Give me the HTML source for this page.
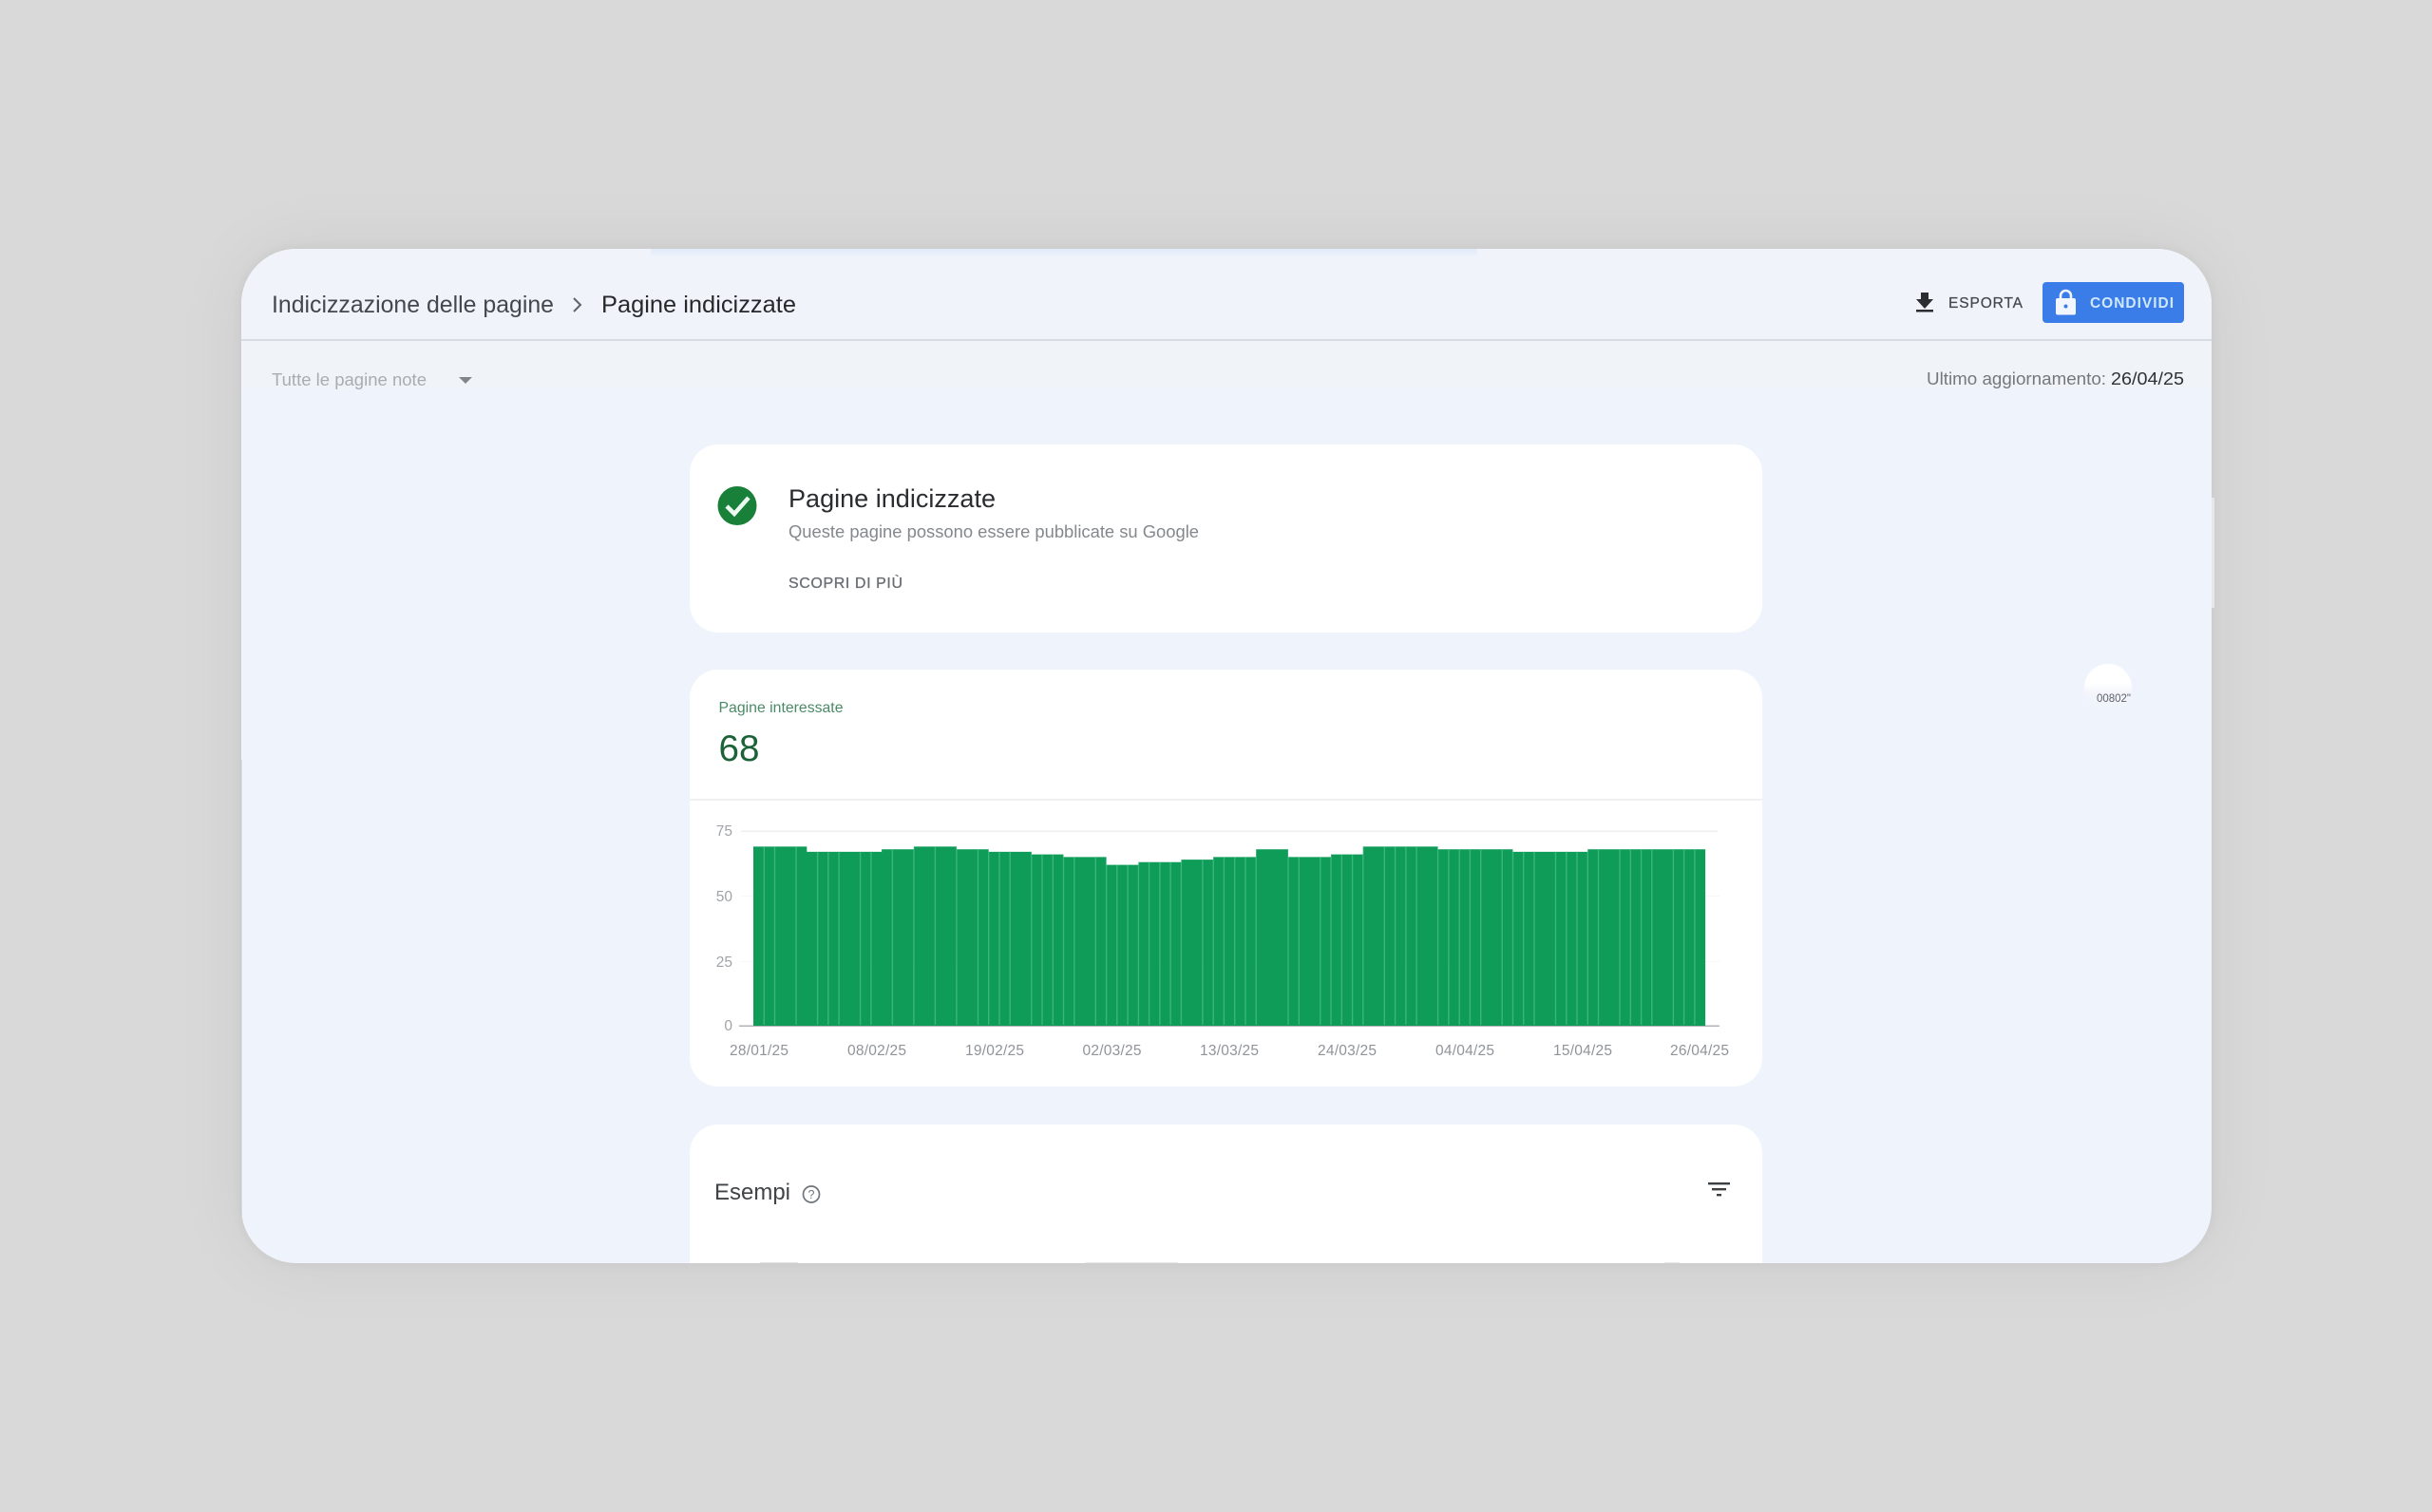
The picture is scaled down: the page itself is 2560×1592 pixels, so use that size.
<!DOCTYPE html>
<html lang="it">
<head>
<meta charset="utf-8">
<title>Pagine indicizzate</title>
<style>
html,body{margin:0;padding:0;width:2560px;height:1592px;overflow:hidden;background:#d9d9d9}
#shadow{position:absolute;left:254px;top:262px;width:2074px;height:1068px;border-radius:58px;box-shadow:0 0 12px rgba(0,0,0,.05),0 0 80px rgba(0,0,0,.06)}
svg{position:absolute;left:0;top:0}
text{font-family:"Liberation Sans",sans-serif}
</style>
</head>
<body>
<div id="shadow"></div>
<svg width="2560" height="1592" viewBox="0 0 2560 1592" xmlns="http://www.w3.org/2000/svg">
<defs>
<clipPath id="panel"><rect x="254" y="262" width="2074" height="1068" rx="58" ry="58"/></clipPath>
<clipPath id="bars"><path d="M793 1080V891.4H849.3V896.9H928.1V894.2H961.9V891.4H1006.9V894.2H1040.7V896.9H1085.8V899.6H1119.5V902.4H1164.6V910.6H1198.4V907.8H1243.4V905.1H1277.2V902.4H1322.2V894.2H1356V902.4H1401V899.6H1434.8V891.4H1513.6V894.2H1592.5V896.9H1671.3V894.2H1795.1V1080Z"/></clipPath>
<linearGradient id="band" x1="0" y1="0" x2="0" y2="1"><stop offset="0" stop-color="#e0eafa"/><stop offset="1" stop-color="#eff3fb"/></linearGradient>
<linearGradient id="dot" x1="0" y1="0" x2="0" y2="1"><stop offset="0" stop-color="#ffffff"/><stop offset=".4" stop-color="#ffffff"/><stop offset=".62" stop-color="#f3f5fb"/><stop offset="1" stop-color="#eff3fb"/></linearGradient>
</defs>

<g clip-path="url(#panel)">
<rect x="254" y="262" width="2074" height="1068" fill="#eff3fb"/>
<rect x="254" y="262" width="2074" height="96" fill="#f0f4fa"/>
<rect x="685" y="262" width="870" height="8" fill="url(#band)"/>
<rect x="254" y="357" width="2074" height="2" fill="#d6dbe2"/>
<rect x="254" y="359" width="2074" height="50" fill="#f0f3f8"/>

<!-- header -->
<text x="286" y="329" font-size="25" fill="#44474b" textLength="297" lengthAdjust="spacingAndGlyphs">Indicizzazione delle pagine</text>
<path d="M604 314L611 321L604 328" fill="none" stroke="#5f6368" stroke-width="2"/>
<text x="633" y="329" font-size="25" fill="#26282b" textLength="205" lengthAdjust="spacingAndGlyphs">Pagine indicizzate</text>

<path d="M2022 308H2030V315H2035L2026 325L2017 315H2022Z" fill="#2b2d30"/>
<rect x="2017" y="326" width="18" height="2.5" fill="#2b2d30"/>
<text x="2051" y="324" font-size="15.5" fill="#45484c" textLength="78" lengthAdjust="spacing" stroke="#45484c" stroke-width=".25">ESPORTA</text>

<rect x="2150" y="297" width="149" height="43" rx="4" fill="#3a7de8"/>
<rect x="2164" y="314" width="21" height="17.5" rx="2" fill="#f2f7ff"/>
<path d="M2169 315V311.500A5.500 5.500 0 0 1 2180 311.500V315" fill="none" stroke="#f2f7ff" stroke-width="2.600"/>
<circle cx="2174.500" cy="322.500" r="2" fill="#3a7de8"/>
<text x="2200" y="324" font-size="15.5" fill="#cfe7ff" textLength="88" lengthAdjust="spacing" font-weight="700">CONDIVIDI</text>

<!-- sub header -->
<text x="286" y="406" font-size="18.5" fill="#a9adb2" textLength="163" lengthAdjust="spacingAndGlyphs">Tutte le pagine note</text>
<path d="M483 397H497L490 404Z" fill="#80868b"/>
<text x="2028" y="405" font-size="18.5" fill="#75797f" textLength="189" lengthAdjust="spacingAndGlyphs">Ultimo aggiornamento:</text>
<text x="2222" y="405" font-size="18.5" fill="#303336" textLength="77" lengthAdjust="spacingAndGlyphs">26/04/25</text>

<!-- status card -->
<rect x="726" y="468" width="1129" height="198" rx="30" fill="#ffffff"/>
<circle cx="776" cy="532.500" r="20.500" fill="#188038"/>
<path d="M765 533L773 541L788 524" fill="none" stroke="#ecfbf1" stroke-width="4.500"/>
<text x="830" y="534" font-size="27" fill="#2a2c2f" textLength="218" lengthAdjust="spacingAndGlyphs">Pagine indicizzate</text>
<text x="830" y="566" font-size="18.5" fill="#84888d" textLength="432" lengthAdjust="spacingAndGlyphs">Queste pagine possono essere pubblicate su Google</text>
<text x="830" y="619" font-size="16" fill="#6a6e73" textLength="120" lengthAdjust="spacing" stroke="#6a6e73" stroke-width=".3">SCOPRI DI PIÙ</text>

<!-- chart card -->
<rect x="726" y="705" width="1129" height="439" rx="30" fill="#ffffff"/>
<text x="756.500" y="750" font-size="16" fill="#4a8a66" textLength="131" lengthAdjust="spacingAndGlyphs">Pagine interessate</text>
<text x="756.500" y="801" font-size="39" fill="#1c6238" textLength="43" lengthAdjust="spacingAndGlyphs">68</text>
<rect x="726" y="841" width="1129" height="2" fill="#f0f0f0"/>
<rect x="780" y="874.500" width="1028" height="1.500" fill="#efefef"/>
<rect x="780" y="943" width="1030" height="1" fill="#f7f7f7"/>
<rect x="780" y="1012" width="1030" height="1" fill="#f7f7f7"/>
<rect x="778" y="1079.500" width="1032" height="1.500" fill="#b0b4b8"/>

<g font-size="15.5" fill="#a0a4a8" text-anchor="end">
<text x="771" y="880">75</text>
<text x="771" y="949">50</text>
<text x="771" y="1018">25</text>
<text x="771" y="1085">0</text>
</g>

<path d="M793 1080V891.4H849.3V896.9H928.1V894.2H961.9V891.4H1006.9V894.2H1040.7V896.9H1085.8V899.6H1119.5V902.4H1164.6V910.6H1198.4V907.8H1243.4V905.1H1277.2V902.4H1322.2V894.2H1356V902.4H1401V899.6H1434.8V891.4H1513.6V894.2H1592.5V896.9H1671.3V894.2H1795.1V1080Z" fill="#0e9c58"/>
<path clip-path="url(#bars)" fill="none" stroke="#3ab67c" stroke-width="1.4" d="M804.3 880V1079M815.5 880V1079M838 880V1079M860.6 880V1079M871.8 880V1079M883.1 880V1079M905.6 880V1079M916.9 880V1079M939.4 880V1079M961.9 880V1079M984.4 880V1079M1006.9 880V1079M1029.5 880V1079M1040.7 880V1079M1052 880V1079M1063.2 880V1079M1085.8 880V1079M1097 880V1079M1108.3 880V1079M1119.5 880V1079M1130.8 880V1079M1153.3 880V1079M1164.6 880V1079M1175.8 880V1079M1187.1 880V1079M1198.4 880V1079M1209.6 880V1079M1220.9 880V1079M1232.1 880V1079M1243.4 880V1079M1265.9 880V1079M1277.2 880V1079M1288.4 880V1079M1299.7 880V1079M1311 880V1079M1322.2 880V1079M1356 880V1079M1367.3 880V1079M1389.8 880V1079M1401 880V1079M1412.3 880V1079M1423.6 880V1079M1434.8 880V1079M1457.3 880V1079M1468.6 880V1079M1479.9 880V1079M1491.1 880V1079M1513.6 880V1079M1524.9 880V1079M1536.2 880V1079M1547.4 880V1079M1558.7 880V1079M1581.2 880V1079M1592.5 880V1079M1603.7 880V1079M1615 880V1079M1637.5 880V1079M1648.8 880V1079M1660 880V1079M1671.3 880V1079M1682.5 880V1079M1705 880V1079M1716.3 880V1079M1727.6 880V1079M1738.8 880V1079M1761.4 880V1079M1772.6 880V1079M1783.9 880V1079"/>

<g font-size="15.5" fill="#909499">
<text x="768" y="1111" textLength="62">28/01/25</text>
<text x="892" y="1111" textLength="62">08/02/25</text>
<text x="1016" y="1111" textLength="62">19/02/25</text>
<text x="1139.5" y="1111" textLength="62">02/03/25</text>
<text x="1263" y="1111" textLength="62">13/03/25</text>
<text x="1387" y="1111" textLength="62">24/03/25</text>
<text x="1511" y="1111" textLength="62">04/04/25</text>
<text x="1635" y="1111" textLength="62">15/04/25</text>
<text x="1758" y="1111" textLength="62">26/04/25</text>
</g>

<!-- examples card -->
<rect x="726" y="1184" width="1129" height="200" rx="30" fill="#ffffff"/>
<text x="752" y="1263" font-size="24.5" fill="#404347" textLength="80" lengthAdjust="spacingAndGlyphs">Esempi</text>
<circle cx="854" cy="1257.500" r="8.500" fill="none" stroke="#70757a" stroke-width="1.700"/>
<text x="854" y="1262" font-size="12.5" fill="#70757a" text-anchor="middle">?</text>
<rect x="1798" y="1245" width="23" height="2.400" fill="#3c4043"/>
<rect x="1802" y="1251" width="15" height="2.400" fill="#3c4043"/>
<rect x="1807" y="1257" width="5" height="2.400" fill="#3c4043"/>

<!-- faint clipped table heading -->
<rect x="800" y="1329" width="40" height="1" fill="#e4e4e4"/>
<rect x="1142" y="1329" width="98" height="1" fill="#e8e8e8"/>
<rect x="1752" y="1329" width="16" height="1" fill="#e8e8e8"/>

<!-- floating dot -->
<circle cx="2219" cy="724" r="25" fill="url(#dot)"/>
<text x="2207" y="739" font-size="11.5" fill="#5f6368" textLength="36" lengthAdjust="spacingAndGlyphs">00802"</text>
</g>

<!-- edge artefacts -->
<rect x="2328" y="524" width="3" height="116" fill="#e6e7e9"/>
<rect x="253.500" y="800" width="1.200" height="480" fill="#b9bcc2" opacity=".5"/>
</svg>
</body>
</html>
